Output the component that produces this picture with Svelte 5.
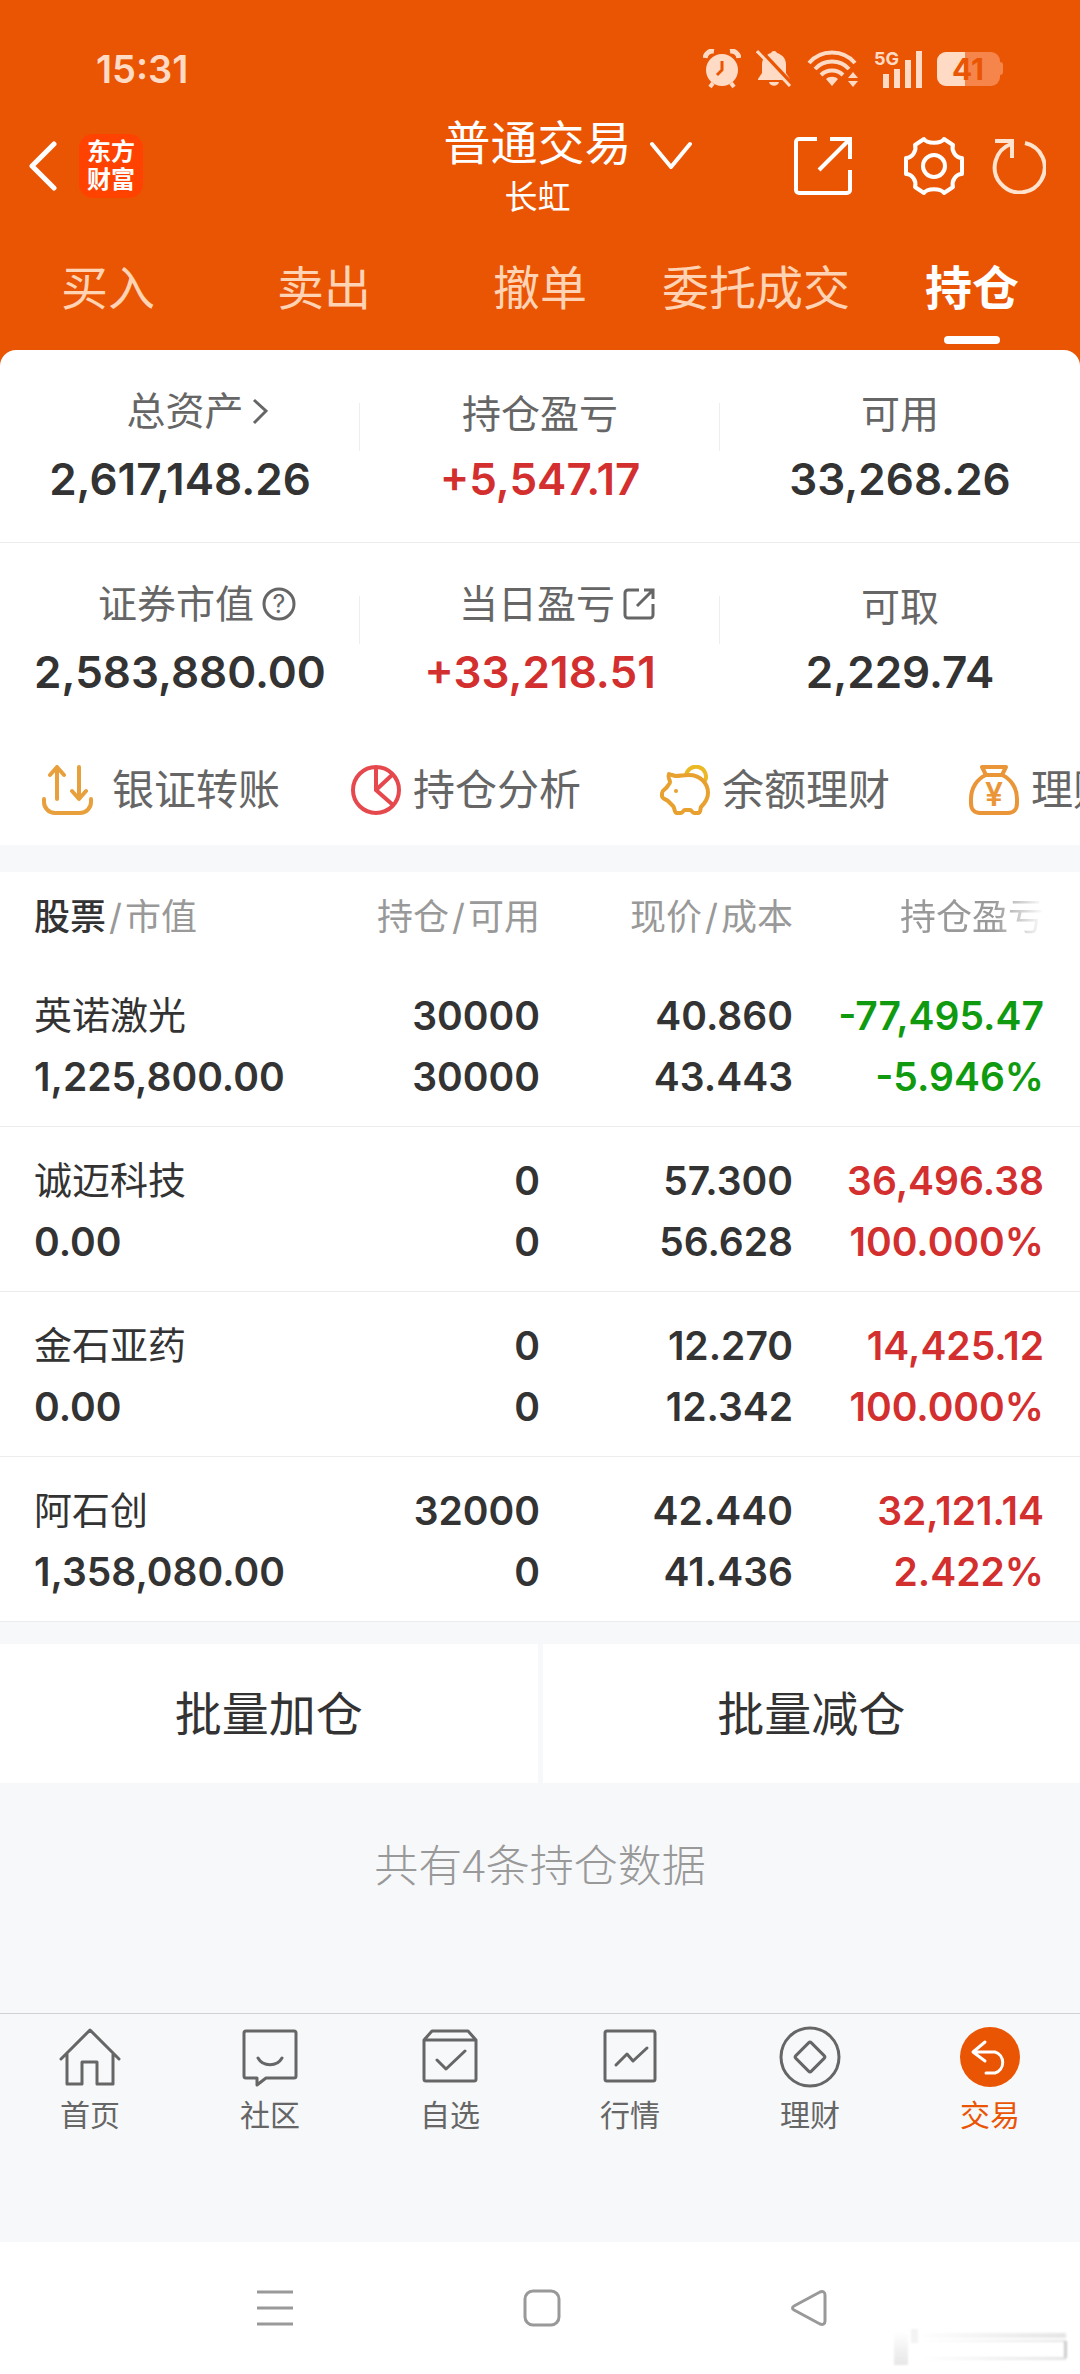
<script lang="ts">
	type Tone = 'up' | 'down' | 'plain';

	interface Metric {
		label: string;
		value: string;
		tone: Tone;
		icon?: 'chevron' | 'help' | 'share';
	}

	interface Holding {
		name: string;
		marketValue: string;
		amount: string;
		available: string;
		price: string;
		cost: string;
		profit: string;
		rate: string;
		tone: Tone;
	}

	const tabs = ['买入', '卖出', '撤单', '委托成交', '持仓'];
	let activeTab = $state('持仓');

	const metrics: Metric[][] = [
		[
			{ label: '总资产', value: '2,617,148.26', tone: 'plain', icon: 'chevron' },
			{ label: '持仓盈亏', value: '+5,547.17', tone: 'up' },
			{ label: '可用', value: '33,268.26', tone: 'plain' }
		],
		[
			{ label: '证券市值', value: '2,583,880.00', tone: 'plain', icon: 'help' },
			{ label: '当日盈亏', value: '+33,218.51', tone: 'up', icon: 'share' },
			{ label: '可取', value: '2,229.74', tone: 'plain' }
		]
	];

	const shortcuts = [
		{ id: 'transfer', label: '银证转账' },
		{ id: 'analysis', label: '持仓分析' },
		{ id: 'piggy', label: '余额理财' },
		{ id: 'bag', label: '理财' }
	];

	const holdings: Holding[] = [
		{
			name: '英诺激光',
			marketValue: '1,225,800.00',
			amount: '30000',
			available: '30000',
			price: '40.860',
			cost: '43.443',
			profit: '-77,495.47',
			rate: '-5.946%',
			tone: 'down'
		},
		{
			name: '诚迈科技',
			marketValue: '0.00',
			amount: '0',
			available: '0',
			price: '57.300',
			cost: '56.628',
			profit: '36,496.38',
			rate: '100.000%',
			tone: 'up'
		},
		{
			name: '金石亚药',
			marketValue: '0.00',
			amount: '0',
			available: '0',
			price: '12.270',
			cost: '12.342',
			profit: '14,425.12',
			rate: '100.000%',
			tone: 'up'
		},
		{
			name: '阿石创',
			marketValue: '1,358,080.00',
			amount: '32000',
			available: '0',
			price: '42.440',
			cost: '41.436',
			profit: '32,121.14',
			rate: '2.422%',
			tone: 'up'
		}
	];

	const navItems = [
		{ id: 'home', label: '首页' },
		{ id: 'community', label: '社区' },
		{ id: 'watchlist', label: '自选' },
		{ id: 'market', label: '行情' },
		{ id: 'wealth', label: '理财' },
		{ id: 'trade', label: '交易' }
	];
</script>

<div class="page">
	<div class="top">
		<div class="status">
			<span class="clock">15:31</span>
			<div class="status-icons">
				<svg width="38" height="40" viewBox="0 0 38 40" fill="none" aria-hidden="true">
					<circle cx="19" cy="21" r="16" fill="#ffdac4" />
					<path d="M2 9a8 8 0 0 1 9-7M36 9a8 8 0 0 0-9-7" stroke="#ffdac4" stroke-width="5" />
					<path d="M10 34l-3 4M28 34l3 4" stroke="#ffdac4" stroke-width="4" />
					<path d="M19 12v9l-5 5" stroke="#ea5504" stroke-width="3" />
				</svg>
				<svg width="36" height="40" viewBox="0 0 36 40" fill="none" aria-hidden="true">
					<path
						d="M18 2a3 3 0 0 1 3 2c6 2 9 6 9 12v8l4 6v1H2v-1l4-6v-8c0-6 3-10 9-12a3 3 0 0 1 3-2zM13 33h10c-1 5-9 5-10 0z"
						fill="#ffdac4"
					/>
					<path d="M3 0l33 35" stroke="#ea5504" stroke-width="4" />
					<path d="M1 2l33 35" stroke="#ffdac4" stroke-width="3" />
				</svg>
				<svg width="52" height="40" viewBox="0 0 52 40" fill="none" aria-hidden="true">
					<path
						d="M2 14C14 0 36 0 48 14M8 20c9-10 25-10 34 0M14 26c6-6 16-6 22 0"
						stroke="#ffdac4"
						stroke-width="4"
					/>
					<path d="M19 30c3-3 9-3 12 0l-6 7z" fill="#ffdac4" />
					<path d="M41 29l5-6 5 6zM41 32l5 6 5-6z" fill="#ffdac4" />
				</svg>
				<svg width="48" height="40" viewBox="0 0 48 40" aria-hidden="true">
					<text x="0" y="16" class="net">5G</text>
					<path d="M9 25h6v14H9zM20 20h6v19h-6zM31 11h6v28h-6zM42 2h6v37h-6z" fill="#ffdac4" />
				</svg>
				<svg width="66" height="36" viewBox="0 0 66 36" aria-hidden="true">
					<path d="M62 11h1a3 3 0 0 1 3 3v7a3 3 0 0 1-3 3h-1z" fill="#f5854b" />
					<rect x="0" y="1" width="63" height="34" rx="9" fill="#f5854b" />
					<path d="M9 1h19v34H9a9 9 0 0 1-9-9V10a9 9 0 0 1 9-9z" fill="#ffdac4" />
					<text x="31" y="29" text-anchor="middle" class="charge">41</text>
				</svg>
			</div>
		</div>

		<header class="bar">
			<div class="lead">
				<button type="button" aria-label="返回">
					<svg width="28" height="50" viewBox="0 0 28 50" fill="none" aria-hidden="true">
						<path d="M25 3L3 25l22 22" stroke="#fff" stroke-width="5" stroke-linecap="round" stroke-linejoin="round" />
					</svg>
				</button>
				<span class="logo">东方<br />财富</span>
			</div>

			<button type="button" class="account">
				<span class="account-type">普通交易</span>
				<svg width="42" height="30" viewBox="0 0 42 30" fill="none" aria-hidden="true">
					<path d="M2 3l19 23L40 3" stroke="#fff" stroke-width="4" stroke-linecap="round" stroke-linejoin="round" />
				</svg>
				<span class="account-name">长虹</span>
			</button>

			<div class="actions">
				<button type="button" class="open" aria-label="打开">
					<svg width="58" height="58" viewBox="0 0 58 58" fill="none" stroke="#fff" stroke-width="4" aria-hidden="true">
						<path d="M23 2H5a3 3 0 0 0-3 3v48a3 3 0 0 0 3 3h48a3 3 0 0 0 3-3V33M36 2h20v20M56 2L25 33" />
					</svg>
				</button>
				<button type="button" aria-label="设置">
					<svg width="60" height="60" viewBox="0 0 60 60" fill="none" stroke="#fff" stroke-width="4" stroke-linejoin="round" aria-hidden="true">
						<path
							d="M20 3c3 5 17 5 20 0l9 6c-2 6 3 13 9 13v16c-6 0-11 7-9 13l-9 6c-3-5-17-5-20 0l-9-6c2-6-3-13-9-13V22c6 0 11-7 9-13z"
						/>
						<circle cx="30" cy="30" r="11" />
					</svg>
				</button>
				<button type="button" aria-label="刷新">
					<svg width="54" height="56" viewBox="0 0 54 56" fill="none" stroke="#ffe3cf" stroke-width="4" aria-hidden="true">
						<path d="M33 5a25 25 0 1 1-14 1" />
						<path d="M3 3h17v17" />
					</svg>
				</button>
			</div>
		</header>

		<nav class="tabs">
			{#each tabs as tab (tab)}
				<button type="button" class="tab" class:active={tab === activeTab} onclick={() => (activeTab = tab)}>
					{tab}
				</button>
			{/each}
		</nav>

		<section class="card">
			{#each metrics as row, index (index)}
				<div class="metrics">
					{#each row as metric (metric.label)}
						<div class="metric">
							<div class="label" class:with-icon={metric.icon}>
								{metric.label}
								{#if metric.icon === 'chevron'}
									<svg width="16" height="28" viewBox="0 0 16 28" fill="none" aria-hidden="true">
										<path d="M2 3l12 11L2 26" stroke="#666" stroke-width="3" />
									</svg>
								{:else if metric.icon === 'help'}
									<svg width="34" height="34" viewBox="0 0 34 34" fill="none" aria-hidden="true">
										<circle cx="17" cy="17" r="15" stroke="#666" stroke-width="3" />
										<text x="17" y="26" text-anchor="middle" class="mark">?</text>
									</svg>
								{:else if metric.icon === 'share'}
									<svg width="32" height="34" viewBox="0 0 32 34" fill="none" stroke="#666" stroke-width="3" aria-hidden="true">
										<path d="M16 3H5a3 3 0 0 0-3 3v22a3 3 0 0 0 3 3h22a3 3 0 0 0 3-3V17M21 3h9v9M30 3L14 19" />
									</svg>
								{/if}
							</div>
							<div class="value {metric.tone}">{metric.value}</div>
						</div>
					{/each}
				</div>
			{/each}

			<div class="shortcuts">
				{#each shortcuts as item (item.id)}
					<button type="button" class="shortcut">
						{#if item.id === 'transfer'}
							<svg width="58" height="50" viewBox="0 0 58 50" fill="none" stroke="#e8a03c" stroke-width="4" stroke-linecap="round" stroke-linejoin="round" aria-hidden="true">
								<path d="M15 34V3M8 10l7-8 7 8M37 2v31M30 26l7 8 7-8M2 34v3a11 11 0 0 0 11 11h25a11 11 0 0 0 11-11v-3" />
							</svg>
						{:else if item.id === 'analysis'}
							<svg width="50" height="50" viewBox="0 0 50 50" fill="none" stroke="#e5484d" stroke-width="4" aria-hidden="true">
								<circle cx="25" cy="25" r="23" />
								<path d="M25 2v23l17 15M25 25L41 10" />
							</svg>
						{:else if item.id === 'piggy'}
							<svg width="50" height="50" viewBox="0 0 50 50" fill="none" stroke="#e8a02e" stroke-width="4" stroke-linejoin="round" aria-hidden="true">
								<path d="M26 11a10 10 0 1 1 19 5" stroke="#ebb926" />
								<path
									d="M9 9c2 1 4 1 6 2 5 0 9-1 14-1 11 0 19 8 19 18 0 6-3 10-7 14-1 2 0 6-3 6h-4c-2 0-2-3-4-3h-5c-2 0-2 3-4 3h-4c-3 0-2-5-4-7l-5-5c-2-2-6-2-6-5v-3c0-3 4-4 5-6s3-3 3-5c0-3-3-4-1-8z"
								/>
								<circle cx="16" cy="26" r="2" fill="#e8a02e" stroke="none" />
							</svg>
						{:else}
							<svg width="50" height="50" viewBox="0 0 50 50" fill="none" stroke="#ea9638" stroke-width="4" stroke-linejoin="round" aria-hidden="true">
								<path d="M13 2h24l-4 8H17zM17 10C8 14 2 23 2 34v4c0 6 3 10 9 10h28c6 0 9-4 9-10v-4c0-11-6-20-15-24" />
								<text x="25" y="41" text-anchor="middle" class="yuan">¥</text>
							</svg>
						{/if}
						<span>{item.label}</span>
					</button>
				{/each}
			</div>
		</section>
	</div>

	<table class="holdings">
		<thead>
			<tr>
				<th class="name"><b>股票</b><i>/</i>市值</th>
				<th class="amount">持仓<i>/</i>可用</th>
				<th>现价<i>/</i>成本</th>
				<th class="profit"><span class="fade">持仓盈亏</span></th>
			</tr>
		</thead>
		<tbody>
			{#each holdings as item (item.name)}
				<tr>
					<td><span class="stock">{item.name}</span><span>{item.marketValue}</span></td>
					<td><span>{item.amount}</span><span>{item.available}</span></td>
					<td><span>{item.price}</span><span>{item.cost}</span></td>
					<td class={item.tone}><span>{item.profit}</span><span>{item.rate}</span></td>
				</tr>
			{/each}
		</tbody>
	</table>

	<div class="batch">
		<button type="button">批量加仓</button>
		<button type="button">批量减仓</button>
	</div>

	<p class="total">共有4条持仓数据</p>

	<nav class="bottom">
		{#each navItems as item (item.id)}
			<a href="#{item.id}" class:current={item.id === 'trade'}>
				<svg width="64" height="64" viewBox="0 0 64 64" fill="none" stroke="#666" stroke-width="3" stroke-linecap="round" stroke-linejoin="round" aria-hidden="true">
					{#if item.id === 'home'}
						<path d="M3 34L32 5l29 29M9 29v30h15V37h15v22h16V29" />
					{:else if item.id === 'community'}
						<path d="M8 6h48a2 2 0 0 1 2 2v43a2 2 0 0 1-2 2H28l-9 7v-7H8a2 2 0 0 1-2-2V8a2 2 0 0 1 2-2zM20 33c5 9 19 9 24 0" />
					{:else if item.id === 'watchlist'}
						<path d="M6 15l8-9h36l8 9v39a2 2 0 0 1-2 2H8a2 2 0 0 1-2-2zM6 15h52M19 35l9 9 19-18" />
					{:else if item.id === 'market'}
						<rect x="7" y="6" width="50" height="50" rx="2" />
						<path d="M18 40l11-11 6 7 14-13" />
					{:else if item.id === 'wealth'}
						<circle cx="32" cy="32" r="29" />
						<rect x="21" y="21" width="22" height="22" rx="2" transform="rotate(45 32 32)" />
					{:else}
						<circle cx="32" cy="32" r="30" fill="#ea5504" stroke="none" />
						<path d="M27 17L15 27l12 9M16 27h21a11 11 0 0 1 0 21h-9" stroke="#fff" />
					{/if}
				</svg>
				<span>{item.label}</span>
			</a>
		{/each}
	</nav>

	<div class="system">
		<button type="button" aria-label="最近任务">
			<svg width="36" height="38" viewBox="0 0 36 38" stroke="#999" stroke-width="3" aria-hidden="true">
				<path d="M0 3h36M0 19h36M0 35h36" />
			</svg>
		</button>
		<button type="button" aria-label="主屏幕">
			<svg width="38" height="38" viewBox="0 0 38 38" fill="none" stroke="#999" stroke-width="3" aria-hidden="true">
				<rect x="2" y="2" width="34" height="34" rx="8" />
			</svg>
		</button>
		<button type="button" aria-label="返回上一级">
			<svg width="36" height="38" viewBox="0 0 36 38" fill="none" stroke="#999" stroke-width="3" stroke-linejoin="round" aria-hidden="true">
				<path d="M3 17L29 3c3-1 5 0 5 3v26c0 3-2 4-5 3L3 21c-2-1-2-3 0-4z" />
			</svg>
		</button>
		<svg class="smudge" width="192" height="38" viewBox="0 0 192 38" aria-hidden="true">
			<defs>
				<linearGradient id="smudge-down" x1="0" y1="0" x2="0" y2="1">
					<stop offset="0" stop-color="#fff" />
					<stop offset="1" stop-color="#e6e6e6" />
				</linearGradient>
				<linearGradient id="smudge-right" x1="0" y1="0" x2="1" y2="0">
					<stop offset="0" stop-color="#fff" />
					<stop offset="1" stop-color="#e4e4e4" />
				</linearGradient>
				<filter id="soft">
					<feGaussianBlur stdDeviation="1" />
				</filter>
			</defs>
			<g filter="url(#soft)">
				<rect x="14" y="4" width="14" height="33" fill="url(#smudge-down)" />
				<rect x="31" y="1" width="7" height="14" fill="#f3f3f3" />
				<rect x="38" y="5" width="148" height="5" fill="url(#smudge-right)" />
				<rect x="38" y="12" width="148" height="2" fill="url(#smudge-right)" />
				<rect x="38" y="29" width="148" height="3" fill="url(#smudge-right)" />
				<rect x="184" y="13" width="3" height="17" fill="#ccc" />
			</g>
		</svg>
	</div>
</div>

<style>
	:global(body) {
		margin: 0;
	}
	.page {
		display: flex;
		flex-direction: column;
		min-height: 100vh;
		overflow: hidden;
		background: #f7f8fa;
		color: #333;
		font-family: Inter, 'Noto Sans CJK SC', sans-serif;
	}
	button {
		padding: 0;
		border: 0;
		background: none;
		color: inherit;
		font: inherit;
	}
	svg {
		display: block;
		flex: none;
	}

	.top {
		background: #ea5504;
	}
	.status {
		display: flex;
		align-items: center;
		justify-content: space-between;
		height: 54px;
		padding: 42px 77px 0 96px;
	}
	.clock {
		color: #ffdac4;
		font-size: 38px;
		font-weight: 600;
	}
	.status-icons {
		display: flex;
		align-items: center;
		gap: 15px;
	}
	.net {
		fill: #ffdac4;
		font-size: 18px;
		font-weight: 700;
	}
	.charge {
		fill: #ea5504;
		font-size: 30px;
		font-weight: 700;
	}

	.bar {
		display: grid;
		grid-template-columns: 1fr auto 1fr;
		align-items: center;
		height: 140px;
		padding: 0 34px 0 29px;
		color: #fff;
	}
	.lead {
		display: flex;
		align-items: center;
		gap: 22px;
	}
	.logo {
		width: 64px;
		padding: 4px 0;
		border-radius: 14px;
		background: #ff4200;
		font-size: 24px;
		font-weight: 700;
		line-height: 28px;
		text-align: center;
	}
	.account {
		display: grid;
		grid-template-columns: 42px auto 42px;
		grid-template-rows: 60px 50px;
		column-gap: 18px;
	}
	.account > * {
		grid-column: 2;
	}
	.account svg {
		grid-column: 3;
		grid-row: 1;
		align-self: end;
	}
	.account-type {
		grid-row: 1;
		font-size: 47px;
		line-height: 64px;
	}
	.account-name {
		font-size: 33px;
		line-height: 52px;
	}
	.actions {
		display: flex;
		align-items: center;
		justify-content: flex-end;
		gap: 28px;
	}
	.open {
		margin-right: 24px;
	}

	.tabs {
		display: grid;
		grid-template-columns: repeat(5, 1fr);
	}
	.tab {
		display: flex;
		flex-direction: column;
		align-items: center;
		gap: 16px;
		padding: 20px 0 6px;
		color: #ffd3b3;
		font-size: 47px;
		line-height: 64px;
		white-space: nowrap;
	}
	.tab::after {
		content: '';
		width: 56px;
		height: 8px;
		border-radius: 4px;
	}
	.tab.active {
		color: #fff;
		font-weight: 700;
	}
	.tab.active::after {
		background: #fff;
	}

	.card {
		overflow: hidden;
		border-radius: 16px 16px 0 0;
		background: #fff;
	}
	.metrics {
		display: grid;
		grid-template-columns: repeat(3, 1fr);
	}
	.metrics + .metrics {
		border-top: 1px solid #ececec;
	}
	.metric {
		padding: 36px 0 32px;
		text-align: center;
	}
	.metric:not(:last-child) {
		background: linear-gradient(#eee, #eee) no-repeat right 53px / 1px 48px;
	}
	.label {
		display: flex;
		align-items: center;
		justify-content: center;
		gap: 8px;
		box-sizing: border-box;
		height: 56px;
		color: #666;
		font-size: 39px;
		line-height: 50px;
	}
	.label.with-icon {
		padding: 0 0 6px 34px;
	}
	.mark {
		fill: #666;
		font-size: 25px;
	}
	.value {
		margin-top: 6px;
		font-size: 44px;
		font-weight: 600;
		line-height: 62px;
	}
	.up {
		color: #d32f2f;
	}
	.down {
		color: #109a10;
	}

	.shortcuts {
		display: flex;
		height: 110px;
		padding-left: 42px;
		overflow: hidden;
	}
	.shortcut {
		display: flex;
		flex: 0 0 309px;
		align-items: center;
		gap: 12px;
		color: #666;
		font-size: 42px;
		line-height: 56px;
		white-space: nowrap;
	}
	.yuan {
		fill: #ea9638;
		stroke: none;
		font-size: 32px;
		font-weight: 600;
	}

	.holdings {
		width: 100%;
		margin-top: 27px;
		border-collapse: separate;
		border-spacing: 0;
		table-layout: fixed;
		background: #fff;
	}
	th,
	td {
		box-sizing: border-box;
		padding: 0;
		text-align: right;
		white-space: nowrap;
	}
	th:first-child,
	td:first-child {
		padding-left: 34px;
		text-align: left;
	}
	th:last-child,
	td:last-child {
		padding-right: 36px;
	}
	th {
		height: 90px;
		color: #999;
		font-size: 36px;
		font-weight: 400;
		line-height: 50px;
	}
	th b {
		color: #333;
		font-weight: 500;
	}
	th i {
		margin: 0 3px;
		font-style: normal;
	}
	.name {
		width: 30%;
	}
	.amount {
		width: 20%;
	}
	.profit {
		width: 287px;
	}
	.fade {
		mask-image: linear-gradient(90deg, #000 65%, transparent 100%);
	}
	td {
		padding: 23px 0 19px;
		border-bottom: 1px solid #ececec;
		font-size: 39px;
		font-weight: 600;
		line-height: 61px;
	}
	td span {
		display: block;
	}
	.stock {
		font-size: 38px;
		font-weight: 400;
	}

	.batch {
		display: grid;
		grid-template-columns: 1fr 1fr;
		gap: 5px;
		margin-top: 22px;
	}
	.batch button {
		height: 139px;
		background: #fff;
		font-size: 47px;
		line-height: 64px;
	}
	.total {
		flex: 1;
		margin: 0;
		padding: 48px 0 116px;
		color: #999;
		font-family: 'Noto Sans CJK SC', sans-serif;
		font-size: 44px;
		font-weight: 300;
		line-height: 64px;
		text-align: center;
	}

	.bottom {
		display: grid;
		grid-template-columns: repeat(6, 1fr);
		padding: 11px 0 104px;
		border-top: 1px solid #d2d2d4;
	}
	.bottom a {
		display: flex;
		flex-direction: column;
		align-items: center;
		gap: 3px;
		color: #666;
		font-size: 30px;
		line-height: 46px;
		text-decoration: none;
	}
	.bottom .current {
		color: #ea5504;
	}

	.system {
		position: relative;
		display: flex;
		align-items: center;
		justify-content: center;
		gap: 230px;
		height: 132px;
		padding-left: 3px;
		background: #fff;
	}
	.smudge {
		position: absolute;
		right: 8px;
		bottom: 8px;
	}
</style>
